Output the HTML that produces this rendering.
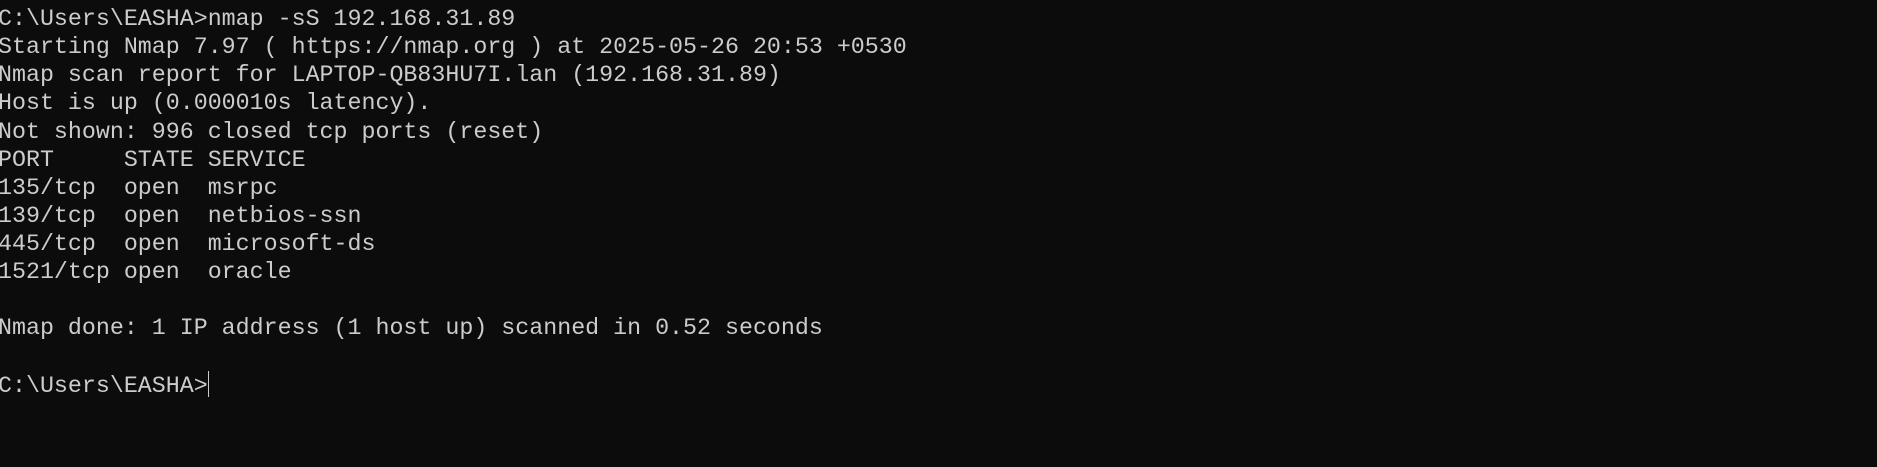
<!DOCTYPE html>
<html><head><meta charset="utf-8"><style>
html,body{margin:0;padding:0;background:#0c0c0c;width:1877px;height:467px;overflow:hidden}
pre{margin:0;position:absolute;left:-2px;top:5px;font-family:"Liberation Mono",monospace;font-size:23.3px;line-height:28.13px;color:#cccccc;white-space:pre}
.c{display:inline-block;width:1px;height:26px;background:#cccccc;vertical-align:-5px}
</style></head><body><pre>C:\Users\EASHA>nmap -sS 192.168.31.89
Starting Nmap 7.97 ( https://nmap.org ) at 2025-05-26 20:53 +0530
Nmap scan report for LAPTOP-QB83HU7I.lan (192.168.31.89)
Host is up (0.000010s latency).
Not shown: 996 closed tcp ports (reset)
PORT     STATE SERVICE
135/tcp  open  msrpc
139/tcp  open  netbios-ssn
445/tcp  open  microsoft-ds
1521/tcp open  oracle

Nmap done: 1 IP address (1 host up) scanned in 0.52 seconds

C:\Users\EASHA><span class="c"></span></pre></body></html>
